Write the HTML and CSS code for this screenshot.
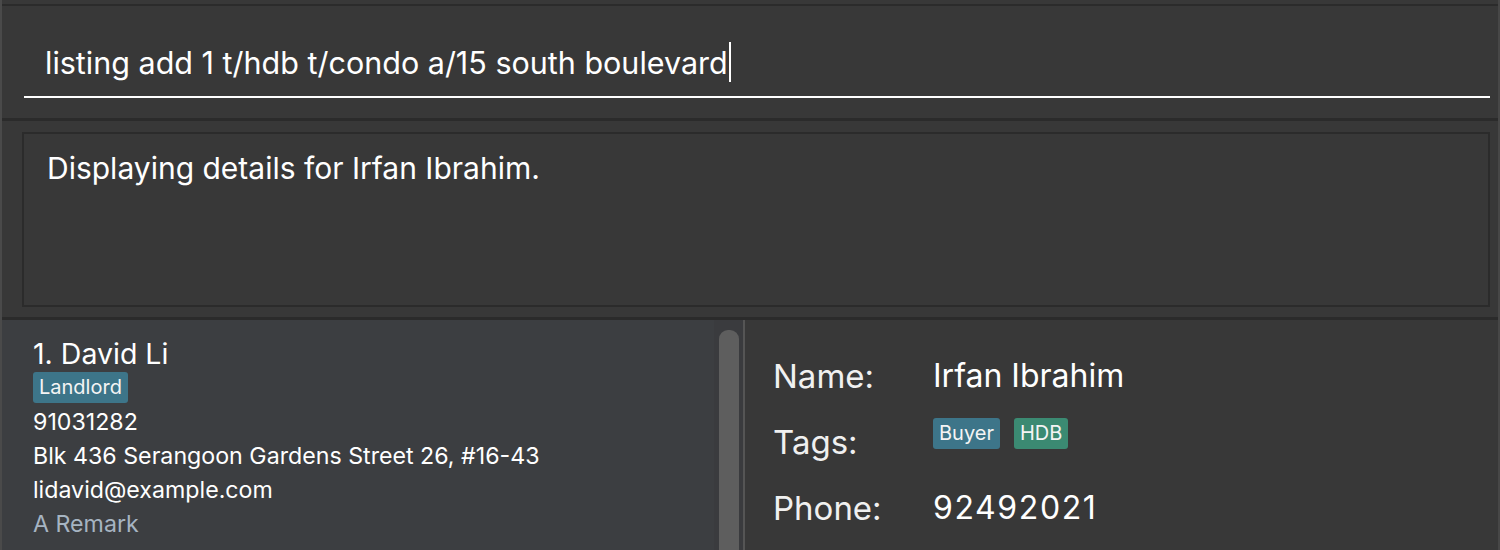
FILE: index.html
```html
<!DOCTYPE html>
<html>
<head>
<meta charset="utf-8">
<link rel="stylesheet" href="styles.css">
</head>
<body>
<div class="app">
  <div class="topstrip"></div>
  <div class="command">
    <div class="cmd-field"><span class="cmd-text">listing add 1 t/hdb t/condo a/15 south boulevard</span><span class="caret"></span></div>
  </div>
  <div class="result">
    <div class="result-box">Displaying details for Irfan Ibrahim.</div>
  </div>
  <div class="bottom">
    <div class="list-pane">
      <div class="cell">
        <div class="cell-name">1. David Li</div>
        <div class="tags"><span class="tag tag-blue">Landlord</span></div>
        <div class="cell-line">91031282</div>
        <div class="cell-line">Blk 436 Serangoon Gardens Street 26, #16-43</div>
        <div class="cell-line">lidavid@example.com</div>
        <div class="cell-line remark">A Remark</div>
      </div>
      <div class="scroll-track"><div class="scroll-thumb"></div></div>
    </div>
    <div class="divider"></div>
    <div class="detail-pane">
      <div class="row"><div class="label">Name:</div><div class="value">Irfan Ibrahim</div></div>
      <div class="row"><div class="label">Tags:</div><div class="value tagrow"><span class="tag tag-blue">Buyer</span><span class="tag tag-green">HDB</span></div></div>
      <div class="row"><div class="label">Phone:</div><div class="value digits">92492021</div></div>
    </div>
  </div>
</div>
</body>
</html>
```
FILE: styles.css
```css
* { box-sizing: border-box; }
html, body { margin: 0; padding: 0; }
body {
  width: 1500px;
  height: 550px;
  overflow: hidden;
  background: #383838;
  font-family: Inter, "Noto Sans", sans-serif;
  color: #ffffff;
}
.app {
  height: 550px;
  border-left: 2px solid #4a4a4a;
  border-right: 2px solid #474747;
  display: flex;
  flex-direction: column;
}
.topstrip {
  height: 6px;
  border-bottom: 2px solid #2b2b2b;
  flex: none;
}
.command {
  height: 115px;
  flex: none;
  padding: 0 8px 0 22px;
  border-bottom: 3px solid #2b2b2b;
}
.cmd-field {
  height: 92px;
  border-bottom: 2px solid #ffffff;
  display: flex;
  align-items: flex-end;
  padding: 0 0 14px 21px;
}
.cmd-text {
  font-size: 30.5px;
  line-height: 38px;
  white-space: nowrap;
}
.caret {
  display: inline-block;
  width: 2px;
  height: 40px;
  background: #ffffff;
  margin-left: 1px;
}
.result {
  height: 199px;
  flex: none;
  padding: 11px 8px 10px 20px;
  border-bottom: 3px solid #2b2b2b;
}
.result-box {
  height: 175px;
  border: 2px solid #2b2b2b;
  padding: 14px 0 0 23px;
  font-size: 30px;
  line-height: 40px;
}
.bottom {
  flex: 1;
  display: flex;
  min-height: 0;
}
.list-pane {
  width: 741px;
  flex: none;
  background: #3a3b3e;
  display: flex;
  padding-right: 3px;
}
.cell {
  width: 712px;
  background: #3c3e41;
  padding: 15px 0 0 31px;
}
.cell-name {
  font-size: 28.5px;
  line-height: 37px;
}
.tags { display: flex; margin: 0 0 2px 0; }
.tag {
  display: inline-block;
  font-size: 20px;
  line-height: 31px;
  height: 31px;
  padding: 0 6px;
  border-radius: 3px;
  color: #f4f4f4;
}
.tag-blue { background: #3d7589; }
.tag-green { background: #3b8a72; }
.cell-line {
  font-size: 23.2px;
  line-height: 34px;
}
.remark { color: #a6b4c2; }
.scroll-track {
  width: 26px;
  padding: 10px 3px 0 5px;
}
.scroll-thumb {
  width: 20px;
  height: 100%;
  background: #5e5e5e;
  border-radius: 9px 9px 0 0;
}
.divider {
  width: 2px;
  background: #555555;
  flex: none;
}
.detail-pane {
  flex: 1;
  background: #383838;
  padding: 36px 0 0 28px;
}
.row {
  display: flex;
  height: 66px;
  align-items: flex-start;
}
.label {
  width: 160px;
  font-size: 33px;
  line-height: 40px;
  color: #f0f0f0;
}
.value {
  font-size: 32px;
  line-height: 40px;
}
.digits { letter-spacing: 1.6px; }
.tagrow { display: flex; gap: 14px; margin-top: -4px; }
```
